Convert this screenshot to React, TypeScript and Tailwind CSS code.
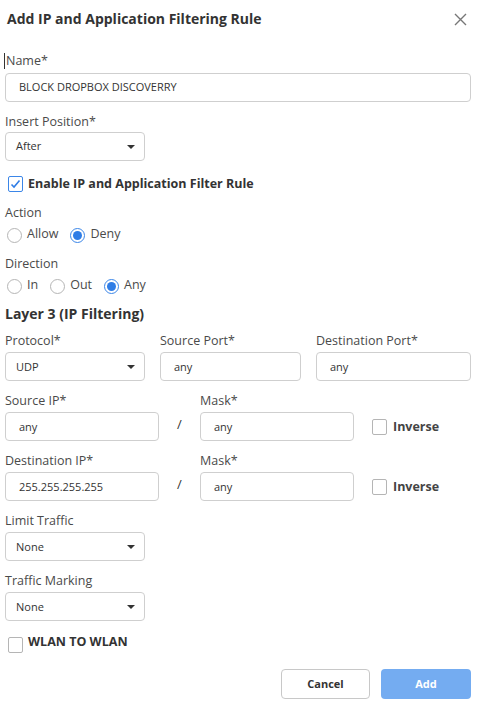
const labelCls = "text-[12.5px] leading-[16px] text-[#4a4a4a]";

function Label({ children, className = "" }: { children: React.ReactNode; className?: string }) {
  return <div className={`${labelCls} ${className}`}>{children}</div>;
}

function TextBox({ value, className = "" }: { value: string; className?: string }) {
  return (
    <div className={`h-[29px] border border-[#cfcfcf] rounded-[4px] bg-white flex items-center pl-[13px] text-[11px] text-[#333] ${className}`}>
      {value}
    </div>
  );
}

function SelectBox({ value, className = "w-[140px]" }: { value: string; className?: string }) {
  return (
    <div className={`h-[29px] border border-[#cfcfcf] rounded-[4px] bg-white flex items-center justify-between pl-[10px] pr-[9px] text-[11px] text-[#333] ${className}`}>
      <span>{value}</span>
      <span className="w-0 h-0 border-l-[4px] border-r-[4px] border-t-[4px] border-l-transparent border-r-transparent border-t-[#333] mt-[1px]" />
    </div>
  );
}

function Radio({ checked, label }: { checked?: boolean; label: string }) {
  return (
    <div className="flex items-center">
      <span className={`w-[15px] h-[15px] rounded-full border flex items-center justify-center mt-[3px] ${checked ? "border-[#3b86e8]" : "border-[#b5b5b5]"}`}>
        {checked && <span className="w-[9px] h-[9px] rounded-full bg-[#2f7de6]" />}
      </span>
      <span className="ml-[5px] text-[12.5px] text-[#4a4a4a]">{label}</span>
    </div>
  );
}

function Check({ checked }: { checked?: boolean }) {
  return (
    <span className={`w-[15px] h-[16px] border rounded-[2px] flex items-center justify-center bg-white ${checked ? "border-[#3b86e8]" : "border-[#b5b5b5]"}`}>
      {checked && (
        <svg width="11" height="10" viewBox="0 0 11 10">
          <path d="M1.5 5.5 L4 8 L9.5 1.5" fill="none" stroke="#2f7de6" strokeWidth="1.6" />
        </svg>
      )}
    </span>
  );
}

export default function App() {
  return (
    <div className="w-[481px] h-[709px] bg-white relative" style={{ fontFamily: '"Open Sans", "Liberation Sans", sans-serif' }}>
      <div className="flex items-center justify-between pl-[7px] pr-[14px] pt-[10px]">
        <h1 className="text-[14px] font-bold text-[#333] leading-[18px]">Add IP and Application Filtering Rule</h1>
        <svg width="13" height="13" viewBox="0 0 13 13">
          <path d="M1 1 L12 12 M12 1 L1 12" stroke="#777" strokeWidth="1.4" />
        </svg>
      </div>

      <div className="pl-[5px] pr-[10px]">
        <Label className="mt-[25px] border-l border-[#333] pl-[1px] -ml-[1px]">Name*</Label>
        <TextBox value="BLOCK DROPBOX DISCOVERRY" className="mt-[4px] w-[466px] text-[10.5px]" />

        <Label className="mt-[12px]">Insert Position*</Label>
        <SelectBox value="After" className="w-[140px] mt-[2px]" />

        <div className="flex items-center mt-[14px] ml-[3px]">
          <Check checked />
          <span className="ml-[5px] text-[12.5px] font-bold text-[#333]">Enable IP and Application Filter Rule</span>
        </div>

        <Label className="mt-[11px]">Action</Label>
        <div className="flex gap-[12px] mt-[4px] ml-[2px]">
          <Radio label="Allow" />
          <Radio checked label="Deny" />
        </div>

        <Label className="mt-[12px]">Direction</Label>
        <div className="flex gap-[12px] mt-[4px] ml-[2px]">
          <Radio label="In" />
          <Radio label="Out" />
          <Radio checked label="Any" />
        </div>

        <h2 className="mt-[11px] text-[14px] font-bold text-[#333] leading-[18px]">Layer 3 (IP Filtering)</h2>

        <div className="flex mt-[10px]">
          <div className="w-[155px]">
            <Label>Protocol*</Label>
            <SelectBox value="UDP" className="w-[140px] mt-[3px]" />
          </div>
          <div className="w-[156px]">
            <Label>Source Port*</Label>
            <TextBox value="any" className="w-[141px] mt-[3px]" />
          </div>
          <div className="w-[155px]">
            <Label>Destination Port*</Label>
            <TextBox value="any" className="w-[155px] mt-[3px]" />
          </div>
        </div>

        {[
          { label: "Source IP*", value: "any" },
          { label: "Destination IP*", value: "255.255.255.255" },
        ].map((row) => (
          <div key={row.label} className="flex mt-[12px]">
            <div className="w-[154px]">
              <Label>{row.label}</Label>
              <TextBox value={row.value} className="w-[154px] mt-[3px]" />
            </div>
            <div className="w-[41px] flex items-end justify-center pb-[7px] text-[13px] text-[#333]">/</div>
            <div className="w-[154px]">
              <Label>Mask*</Label>
              <TextBox value="any" className="w-[154px] mt-[3px]" />
            </div>
            <div className="flex items-end pb-[5px] ml-[18px]">
              <div className="flex items-center">
                <Check />
                <span className="ml-[6px] text-[12.5px] font-bold text-[#444]">Inverse</span>
              </div>
            </div>
          </div>
        ))}

        <Label className="mt-[12px]">Limit Traffic</Label>
        <SelectBox value="None" className="w-[140px] mt-[3px]" />

        <Label className="mt-[12px]">Traffic Marking</Label>
        <SelectBox value="None" className="w-[140px] mt-[3px]" />

        <div className="flex items-center mt-[16px] ml-[3px]">
          <Check />
          <span className="ml-[5px] -mt-[6px] text-[12.5px] font-bold text-[#333]">WLAN TO WLAN</span>
        </div>

        <div className="flex justify-end gap-[11px] mt-[16px]">
          <button className="w-[89px] h-[30px] border border-[#c8c8c8] rounded-[4px] bg-white text-[11px] font-bold text-[#333]">Cancel</button>
          <button className="w-[90px] h-[30px] rounded-[4px] bg-[#74acf1] text-[11px] font-bold text-white">Add</button>
        </div>
      </div>
    </div>
  );
}
